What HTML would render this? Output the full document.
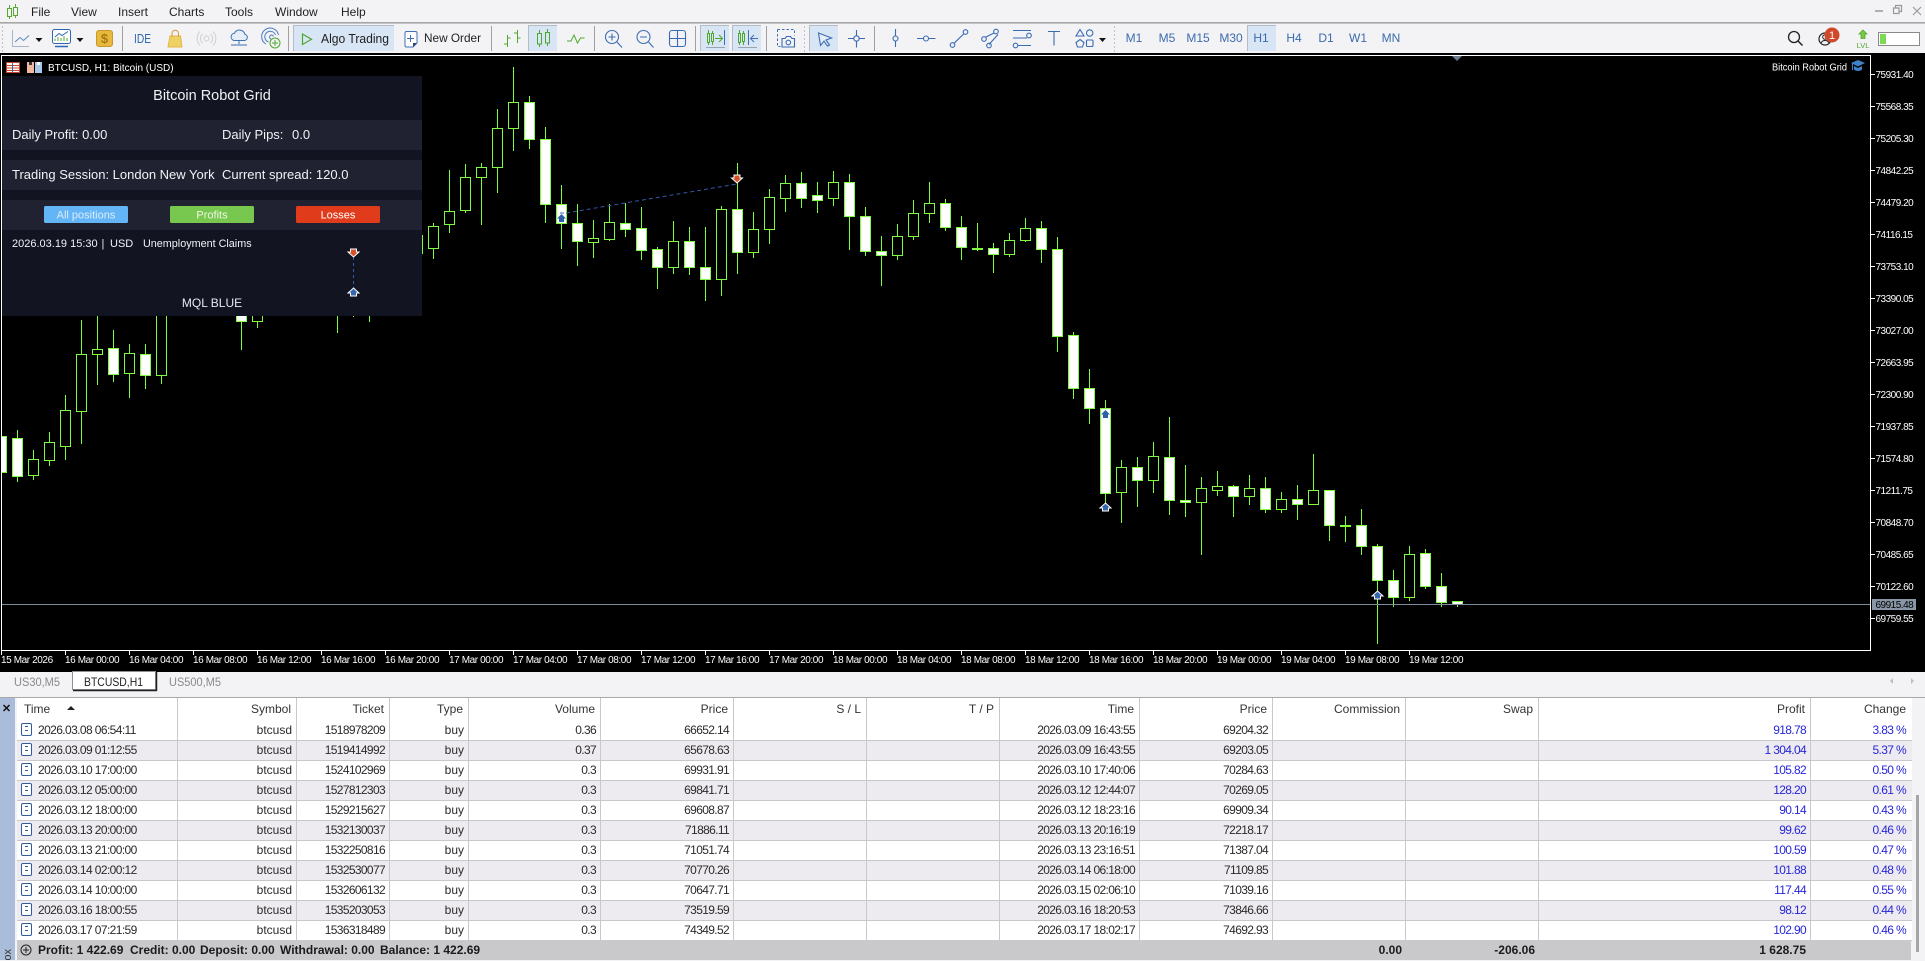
<!DOCTYPE html>
<html><head><meta charset="utf-8"><title>MetaTrader</title>
<style>
html,body{margin:0;padding:0;width:1925px;height:960px;overflow:hidden;background:#f3f2f5;font-family:"Liberation Sans",sans-serif}
svg text{font-family:"Liberation Sans",sans-serif}
#s{position:absolute;left:0;top:0}
#strip{position:absolute;left:0;top:698px;width:15px;height:262px;background:#a9bcd9}
table{position:absolute;left:17px;top:698px;width:1895px;table-layout:fixed;border-collapse:separate;border-spacing:0;font-size:12px;color:#2a2a2a;background:#fff}
th{height:23px;padding:0 5px 2px 0;text-align:right;font-weight:normal;border-right:1px solid #c8c8c8;box-sizing:border-box;white-space:nowrap;color:#333}
td{height:20px;padding:0 4px 0 0;text-align:right;border-right:1px solid #c8c8c8;border-bottom:1px solid #c8c8c8;box-sizing:border-box;white-space:nowrap;line-height:19px}
th:last-child,td:last-child{border-right:0;padding-right:6px}
tr:nth-child(even) td{background:#edebef}
td.n{letter-spacing:-.65px}
td.b{color:#2626d9;letter-spacing:-.65px}
td:first-child{text-align:left;padding-left:4px;letter-spacing:-.6px}
th:first-child{text-align:left;padding-left:7px}
i{display:inline-block;width:9px;height:11px;border:1px solid #2f5a9e;border-radius:2px;margin-right:6px;vertical-align:-2px;position:relative;background:#fff}
i:before{content:"";position:absolute;left:3px;top:2px;width:3px;height:3px;border-top:1px solid #2f5a9e;border-bottom:1px solid #2f5a9e}
#tot{position:absolute;left:17px;top:940px;width:1894px;height:20px;background:#c9c8cb;font-weight:bold;font-size:12px;line-height:21px;color:#1a1a1a}
#tot span{position:absolute;white-space:pre}
#rs{position:absolute;left:1912px;top:698px;width:13px;height:262px;background:#f3f2f5}
#th{position:absolute;left:4px;top:97px;width:3px;height:157px;background:#a5a5a5}
#so{position:absolute;left:67px;top:706px;width:0;height:0;border-left:4px solid transparent;border-right:4px solid transparent;border-bottom:4px solid #222}
</style></head><body>
<svg id="s" width="1925" height="960" viewBox="0 0 1925 960" xmlns="http://www.w3.org/2000/svg">
<defs><clipPath id="c"><rect x="2" y="56" width="1868" height="594"/></clipPath></defs>
<!-- menu -->
<g fill="#1f1f1f" font-size="12">
<text x="31" y="16">File</text><text x="71" y="16">View</text><text x="118" y="16">Insert</text><text x="169" y="16">Charts</text><text x="225" y="16">Tools</text><text x="275" y="16">Window</text><text x="341" y="16">Help</text>
</g>
<path d="M9.5 5v3M9.5 16v3M15.5 4v3M15.5 15v3" stroke="#5aa832" fill="none"/>
<path d="M7.5 8.500h4v8h-4zM13.500 7.500h4v8h-4z" stroke="#5aa832" fill="none"/>
<path d="M1875 11h8" stroke="#999" stroke-width="1.500"/>
<path d="M1893.500 13.500h5.500v-5.500h-5.500zM1895.500 8v-2.500h6v6h-2.500" stroke="#999" fill="none" stroke-width="1.200"/>
<path d="M1913 7l8 8M1921 7l-8 8" stroke="#999" stroke-width="1.200"/>
<rect x="0" y="22" width="1925" height="1" fill="#a6a6a6"/><rect x="0" y="23" width="1925" height="1" fill="#c4c4c4"/>
<!-- toolbar -->
<path d="M2.500 26v26M804.500 26v26M1114.500 26v26" stroke="#c2c2c2" stroke-dasharray="2 2"/>
<g fill="#d7e5f5" stroke="none">
<rect x="293" y="25" width="101" height="26"/><rect x="528" y="25" width="29" height="26"/><rect x="700" y="25" width="29" height="26"/><rect x="732" y="25" width="29" height="26"/><rect x="809" y="25" width="29" height="26"/><rect x="1247" y="25" width="29" height="26"/>
</g>
<path d="M293.500 51V25.500H394M528.500 51V25.500H557M700.500 51V25.500H729M732.500 51V25.500H761M809.500 51V25.500H838M1247.500 51V25.500H1276" stroke="#b4bcc8" fill="none"/>
<path d="M122.500 26v25M288.500 26v25M491.500 26v25M594.500 26v25M695.500 26v25M766.500 26v25M874.500 26v25" stroke="#9f9f9f"/>
<path d="M12.500 30v16.500H29" stroke="#a9b4c6" fill="none"/><path d="M15 42l5-4.500 3.500 3 5.500-5" stroke="#5f8ac4" fill="none"/>
<path d="M35.500 38h7l-3.500 4zM76.500 38h7l-3.500 4zM1099 38h7l-3.500 4z" fill="#111"/>
<rect x="52.500" y="29.500" width="18" height="14" rx="2" fill="#fff" stroke="#2f66b0"/><path d="M55 41v-2.500M58 41v-4M61 41v-3M64 41v-5M67 41v-3" stroke="#5aa832"/><path d="M55 37l4-3.500 3 2 6-4" stroke="#2f66b0" fill="none"/><path d="M55 46.500h13" stroke="#2f66b0" stroke-width="1.500"/>
<rect x="96.500" y="30.500" width="16" height="16" rx="2.500" fill="#e9b93d" stroke="#c8982a"/><text x="104.500" y="43" font-size="13" font-weight="bold" fill="#a67a12" text-anchor="middle">$</text>
<text x="134" y="43" font-size="13" fill="#2f66b0" textLength="17" lengthAdjust="spacingAndGlyphs">IDE</text>
<path d="M170 36h10.500l1.500 11h-14z" fill="#efd064" stroke="#e2b848"/><path d="M172 37v-3.500a3.200 3.200 0 0 1 6.500 0V37" stroke="#d69a3a" fill="none"/>
<g stroke="#cfcfcf" fill="none"><circle cx="206.500" cy="38.500" r="2.500"/><path d="M202.500 34a6 6 0 0 0 0 9M210.500 34a6 6 0 0 1 0 9M200 31.500a10 10 0 0 0 0 14M213 31.500a10 10 0 0 1 0 14"/></g>
<path d="M234 40.500a3.700 3.700 0 0 1 .5-7.300 5.500 5.500 0 0 1 10.300 1 3.200 3.200 0 0 1 -.3 6.300zM239 41v3M231 45h16" stroke="#3f6fb5" fill="#e6eef8"/>
<g fill="none" stroke="#4a7cc0"><path d="M266 44a8.500 8.500 0 1 1 12.500-9M268.500 42a5.500 5.500 0 1 1 7-7M271 39a2 2 0 1 1 2.500-2.500"/></g>
<circle cx="275" cy="43" r="5" fill="#f3f2f5" stroke="#4fa82e"/><path d="M275 40v6M272 43h6" stroke="#4fa82e"/>
<path d="M302.500 34v10.500l9-5.200z" stroke="#4fa82e" fill="none" stroke-width="1.200"/>
<text x="321" y="43" font-size="12.500" fill="#1f1f1f" textLength="68" lengthAdjust="spacingAndGlyphs">Algo Trading</text>
<path d="M406.500 31.500h9a1.500 1.500 0 0 1 1.500 1.500v10l-4 4h-6.500a1.500 1.500 0 0 1 -1.500-1.500V33a1.500 1.500 0 0 1 1.500-1.500z" stroke="#3f6fb5" fill="#fff"/><path d="M410.500 35v7M407 38.500h7" stroke="#3f6fb5"/><path d="M417 43l-4 4v-4z" fill="#33466a"/>
<text x="424" y="42" font-size="12" fill="#1f1f1f" textLength="57" lengthAdjust="spacingAndGlyphs">New Order</text>
<g stroke="#4fa82e" fill="none">
<path d="M507.500 35v12M504 44h3.500M507.500 38h3M517.500 30v13M514 33h3.500M517.500 38h3"/>
<path d="M539.500 30v3M539.500 44v3M547.500 29v3M547.500 43v3"/><rect x="537.500" y="33.500" width="4" height="10.500"/><rect x="545.500" y="32.500" width="4" height="10.500"/>
<path d="M567 41h4l3-6 3.500 8 3-5h4"/>
<path d="M708.500 30v15M712.500 31v14"/><rect x="707.500" y="33.500" width="2" height="9" fill="#d7e5f5"/><rect x="711.500" y="33.500" width="2" height="8" fill="#d7e5f5"/>
<path d="M715 38.500h7M719 35l3.500 3.500-3.500 3.500"/>
<path d="M739.500 30v15M743.500 31v14"/><rect x="738.500" y="33.500" width="2" height="9" fill="#d7e5f5"/><rect x="742.500" y="33.500" width="2" height="8" fill="#d7e5f5"/>
</g>
<path d="M724.500 30v15M748.500 30v15M758 38.500h-7M754 35l-3.500 3.500 3.500 3.500" stroke="#3f6fb5" fill="none"/>
<path d="M706 47.500h19M738 47.500h19" stroke="#9aa3ae"/>
<g fill="none" stroke="#3a6cb2" stroke-width="1.100">
<circle cx="612" cy="37" r="6.500"/><path d="M612 33.500v7M608.500 37h7M617 42l5 5.500"/>
<circle cx="643.500" cy="37" r="6.500"/><path d="M640 37h7M648.500 42l5 5.500"/>
<rect x="669.500" y="30.500" width="16" height="16" rx="2.500"/><path d="M677.500 30.500v16M669.500 38.500h16"/>
<path d="M777.500 29.500h17v6M777.500 29.500v17h3" stroke-dasharray="2.500 2" stroke-width="1"/>
<path d="M782 38.500h3l1.500-2h4l1.500 2h2.500v8.500h-12.500z"/><circle cx="788.300" cy="42.500" r="2.300"/>
<path d="M818.500 33l13 5-5.500 2 3.500 5-2 1.200-3.500-5-3.500 4.300z" fill="#e6eef8"/>
<path d="M856.500 30v5.500M856.500 41.500v6M848 38.500h5.500M859.500 38.500h5.500"/><circle cx="856.500" cy="38.500" r="2.700"/>
<path d="M895.500 29v7M895.500 41v6"/><circle cx="895.500" cy="38.500" r="2.500"/>
<path d="M917 38.500h6.500M928.500 38.500h7"/><circle cx="926" cy="38.500" r="2.500"/>
<circle cx="952.500" cy="45" r="2.300"/><circle cx="965.500" cy="32" r="2.300"/><path d="M954 43.300l10-9.700"/>
<circle cx="984" cy="39" r="2.300"/><circle cx="996" cy="31.500" r="2.300"/><path d="M985.500 37.200l9-4.500M989 44.500l9-10"/><circle cx="989" cy="45.500" r="2.300"/>
<path d="M1013 30.500h18M1013 38h14M1013 45.500h18"/><circle cx="1029" cy="35.500" r="2.300" fill="#f3f2f5"/><circle cx="1015.500" cy="45.500" r="2.300" fill="#f3f2f5"/>
<path d="M1048 31.500h12M1054 31.500v14"/>
<path d="M1080 29.500l4 6.500h-8z"/><circle cx="1089.700" cy="33" r="3.200"/><path d="M1080 39.500l4 3-1.500 4.500h-5l-1.500-4.500z"/><rect x="1086.500" y="40" width="6.500" height="6.500" rx="1"/>
</g>
<g fill="#3b6cad" font-size="12" text-anchor="middle">
<text x="1134" y="42">M1</text><text x="1167" y="42">M5</text><text x="1198" y="42">M15</text><text x="1231" y="42">M30</text><text x="1261" y="42">H1</text><text x="1294" y="42">H4</text><text x="1326" y="42">D1</text><text x="1358" y="42">W1</text><text x="1391" y="42">MN</text>
</g>
<circle cx="1794" cy="37" r="5.500" fill="none" stroke="#222" stroke-width="1.300"/><path d="M1798 41l4.500 4.500" stroke="#222" stroke-width="1.500"/>
<circle cx="1825" cy="39" r="6" fill="none" stroke="#222" stroke-width="1.200"/><circle cx="1825" cy="37" r="2.300" fill="none" stroke="#222"/><path d="M1821 43a4.500 4.500 0 0 1 8 0" fill="none" stroke="#222"/>
<circle cx="1832" cy="35" r="7.500" fill="#d1492b"/><text x="1832" y="39" font-size="11" fill="#fff" text-anchor="middle">1</text>
<path d="M1863 30l4 4h-2v4.500h-4V34h-2z" fill="#7ac943" stroke="#4fa82e" stroke-width=".8"/><text x="1863" y="48" font-size="7.500" fill="#4fa82e" text-anchor="middle">LVL</text>
<rect x="1878.500" y="32.500" width="41" height="13" fill="#fff" stroke="#8a8a8a"/><rect x="1880" y="34" width="6" height="10" fill="#7ed957"/>
<!-- chart -->
<rect x="0" y="53" width="1925" height="619" fill="#000"/>
<path d="M1.500 55.500H1870.500V650.500H1.500z" fill="none" stroke="#fff"/>
<path d="M1452 56h10l-5 5z" fill="#6b7a8a"/>
<g clip-path="url(#c)" shape-rendering="crispEdges">
<path stroke="#7dfb3e" fill="none" d="M17.500 430V482M33.500 450V480M49.500 432V466M65.500 395V460M81.500 320V444M97.500 316V385M113.500 330V382M129.500 344V398M145.500 344V389M161.500 300V384M241.500 300V350M257.500 300V328M337.500 300V333M353.500 300V317M369.500 300V322M433.500 223V259M449.500 170V233M465.500 164V213M481.500 163V225M497.500 109V193M513.500 67V151M529.500 96V149M545.500 127V223M561.500 185V249M577.500 204V266M593.500 220V258M609.500 204V241M625.500 203V237M641.500 207V260M657.500 247V289M673.500 221V274M689.500 227V275M705.500 227V301M721.500 206V296M737.500 163V274M753.500 212V258M769.500 189V244M785.500 175V212M801.500 172V208M817.500 182V213M833.500 171V206M849.500 174V250M865.500 207V256M881.500 236V286M897.500 224V260M913.500 200V240M929.500 182V223M945.500 199V231M961.500 216V260M977.500 223V251M993.500 243V273M1009.500 233V257M1025.500 218V242M1041.500 221V263M1057.500 237V352M1073.500 332V399M1089.500 369V424M1105.500 400V503M1121.500 460V523M1137.500 457V507M1153.500 442V493M1169.500 417V515M1185.500 465V517M1201.500 477V555M1217.500 471V496M1233.500 485V517M1249.500 475V505M1265.500 477V513M1281.500 492V513M1297.500 485V520M1313.500 454V504M1329.500 490V541M1345.500 516V542M1361.500 509V555M1377.500 544V644M1393.500 570V607M1409.500 546V601M1425.500 549V589M1441.500 573V607M1457.500 601V607"/>
<path stroke="#7dfb3e" fill="#000" d="M28.500 459.500h10v16h-10zM44.500 442.500h10v18h-10zM60.500 410.500h10v36h-10zM76.500 354.500h10v57h-10zM92.500 349.500h10v5h-10zM124.500 353.500h10v20h-10zM156.500 300.500h10v75h-10zM252.500 300.500h10v21h-10zM412.500 235.500h10v18h-10zM428.500 226.500h10v22h-10zM444.500 211.500h10v13h-10zM460.500 177.500h10v33h-10zM476.500 167.500h10v10h-10zM492.500 128.500h10v39h-10zM508.500 102.500h10v26h-10zM588.500 238.500h10v4h-10zM604.500 222.500h10v17h-10zM668.500 241.500h10v26h-10zM716.500 209.500h10v70h-10zM748.500 229.500h10v23h-10zM764.500 197.500h10v32h-10zM780.500 183.500h10v15h-10zM828.500 182.500h10v16h-10zM892.500 236.500h10v19h-10zM908.500 213.500h10v23h-10zM924.500 203.500h10v10h-10zM1004.500 240.500h10v14h-10zM1020.500 228.500h10v12h-10zM1116.500 467.500h10v25h-10zM1148.500 456.500h10v24h-10zM1196.500 488.500h10v14h-10zM1212.500 486.500h10v4h-10zM1244.500 488.500h10v8h-10zM1276.500 499.500h10v10h-10zM1308.500 490.500h10v14h-10zM1404.500 554.500h10v43h-10z"/>
<path stroke="#7dfb3e" fill="#fff" d="M-3.500 436.500h10v36h-10zM12.500 438.500h10v38h-10zM108.500 348.500h10v26h-10zM140.500 354.500h10v21h-10zM236.500 300.500h10v21h-10zM524.500 102.500h10v37h-10zM540.500 139.500h10v65h-10zM556.500 204.500h10v19h-10zM572.500 223.500h10v18h-10zM620.500 223.500h10v6h-10zM636.500 228.500h10v22h-10zM652.500 249.500h10v18h-10zM684.500 241.500h10v26h-10zM700.500 267.500h10v12h-10zM732.500 209.500h10v43h-10zM796.500 183.500h10v15h-10zM812.500 195.500h10v5h-10zM844.500 182.500h10v34h-10zM860.500 216.500h10v35h-10zM876.500 251.500h10v4h-10zM940.500 203.500h10v24h-10zM956.500 227.500h10v20h-10zM988.500 248.500h10v6h-10zM1036.500 228.500h10v21h-10zM1052.500 249.500h10v87h-10zM1068.500 335.500h10v53h-10zM1084.500 388.500h10v20h-10zM1100.500 408.500h10v85h-10zM1132.500 467.500h10v13h-10zM1164.500 457.500h10v43h-10zM1180.500 500.500h10v2h-10zM1228.500 486.500h10v10h-10zM1260.500 488.500h10v21h-10zM1292.500 499.500h10v5h-10zM1324.500 490.500h10v35h-10zM1356.500 525.500h10v21h-10zM1372.500 546.500h10v34h-10zM1388.500 580.500h10v17h-10zM1420.500 553.500h10v33h-10zM1436.500 586.500h10v16h-10zM1452.500 601.500h10v3h-10z"/>
<path fill="#7dfb3e" d="M972 248h11v2h-11zM1340 525h11v2h-11z"/>
</g>
<path d="M2 604.500H1870" stroke="#7f8c9c"/>
<!-- trade line and markers -->
<path d="M566 213L737 184" stroke="#3558a8" stroke-dasharray="4 3" fill="none"/>
<!-- panel -->
<rect x="2" y="76" width="420" height="240" fill="#121421"/>
<rect x="2" y="120" width="420" height="30" fill="#212231"/><rect x="2" y="160" width="420" height="30" fill="#212231"/><rect x="2" y="200" width="420" height="30" fill="#212231"/>
<g fill="#f0f2f6" font-size="13">
<text x="212" y="100" font-size="14.500" text-anchor="middle">Bitcoin Robot Grid</text>
<text x="12" y="139">Daily Profit: 0.00</text><text x="222" y="139">Daily Pips:</text><text x="292" y="139">0.0</text>
<text x="12" y="179">Trading Session: London New York</text><text x="222" y="179">Current spread: 120.0</text>
<text x="212" y="307" font-size="12" text-anchor="middle" fill="#e6e9f2">MQL BLUE</text>
<g font-size="11"><text x="12" y="247">2026.03.19 15:30</text><text x="101.500" y="247">|</text><text x="110" y="247">USD</text><text x="143" y="247" font-size="10.800">Unemployment Claims</text></g>
</g>
<rect x="44" y="206" width="84" height="17" rx="1.500" fill="#64b5f6"/><rect x="170" y="206" width="84" height="17" rx="1.500" fill="#78c84f"/><rect x="296" y="206" width="84" height="17" rx="1.500" fill="#e03c1c"/>
<g font-size="11" text-anchor="middle"><text x="86" y="218.500" fill="#dcedfb">All positions</text><text x="212" y="218.500" fill="#eef8e6">Profits</text><text x="338" y="218.500" fill="#fff">Losses</text></g>
<path d="M353.500 257V288" stroke="#3a5fa0" stroke-dasharray="3 3"/>
<g stroke="#fff" stroke-width="1">
<path d="M350.500 249h6v3h2.500l-5.500 5-5.500-5h2.500z" fill="#d4532a"/>
<path d="M734 175h6v3h2.500l-5.500 5-5.500-5h2.500z" fill="#d4532a"/>
<path d="M353.500 288l5.500 5h-2.500v3h-6v-3h-2.500z" fill="#3566ad"/>
<path d="M1105.500 503l5.500 5h-2.500v3h-6v-3h-2.500z" fill="#3566ad"/>
<path d="M1377.500 591l5.500 5h-2.500v3h-6v-3h-2.500z" fill="#3566ad"/>
</g>
<path d="M561.500 214l4.500 4.500h-2v3.500h-5v-3.500h-2zM1105.500 410l4.500 4.500h-2v3.500h-5v-3.500h-2z" fill="#2f5ea8"/><path d="M560 213h4" stroke="#3566ad"/>
<!-- chart title -->
<rect x="6.500" y="62.500" width="13" height="10" fill="#fff" stroke="#c8452d"/><path d="M7 65.500h12M7 68h12M7 70.500h12" stroke="#c8452d"/><path d="M12.500 63v9" stroke="#2f66b0"/>
<rect x="27" y="62" width="7" height="11" fill="#f0b8a0"/><rect x="35" y="62" width="7" height="11" fill="#a9c8ec"/><rect x="29" y="62" width="3" height="3" fill="#333"/><rect x="37" y="62" width="3" height="3" fill="#fff"/>
<g fill="#fff" font-size="10"><text x="48" y="71">BTCUSD, H1:</text><text x="113" y="71">Bitcoin (USD)</text><text x="1772" y="70.500" textLength="75" lengthAdjust="spacingAndGlyphs">Bitcoin Robot Grid</text></g>
<path d="M1851 63l7-3 7 3-7 3.500z" fill="#3f82c8"/><path d="M1854 66v3.500c2 2 6 2 8 0V66l-4 2z" fill="#3f82c8"/><path d="M1852.500 63.500v6.500" stroke="#3f82c8"/>
<!-- price axis -->
<g stroke="#fff"><path d="M1870 74.500h5M1870 106.500h5M1870 138.500h5M1870 170.500h5M1870 202.500h5M1870 234.500h5M1870 266.500h5M1870 298.500h5M1870 330.500h5M1870 362.500h5M1870 394.500h5M1870 426.500h5M1870 458.500h5M1870 490.500h5M1870 522.500h5M1870 554.500h5M1870 586.500h5M1870 618.500h5"/></g>
<g fill="#fff" font-size="10" letter-spacing="-.5">
<text x="1875.500" y="78">75931.40</text><text x="1875.500" y="110">75568.35</text><text x="1875.500" y="142">75205.30</text><text x="1875.500" y="174">74842.25</text><text x="1875.500" y="206">74479.20</text><text x="1875.500" y="238">74116.15</text><text x="1875.500" y="270">73753.10</text><text x="1875.500" y="302">73390.05</text><text x="1875.500" y="334">73027.00</text><text x="1875.500" y="366">72663.95</text><text x="1875.500" y="398">72300.90</text><text x="1875.500" y="430">71937.85</text><text x="1875.500" y="462">71574.80</text><text x="1875.500" y="494">71211.75</text><text x="1875.500" y="526">70848.70</text><text x="1875.500" y="558">70485.65</text><text x="1875.500" y="590">70122.60</text><text x="1875.500" y="622">69759.55</text>
</g>
<rect x="1872" y="599" width="44" height="11" fill="#8896a6"/><text x="1875.500" y="608" font-size="10" letter-spacing="-.5" fill="#000">69915.48</text>
<!-- time axis -->
<path stroke="#fff" d="M1.500 650v5M65.500 650v5M129.500 650v5M193.500 650v5M257.500 650v5M321.500 650v5M385.500 650v5M449.500 650v5M513.500 650v5M577.500 650v5M641.500 650v5M705.500 650v5M769.500 650v5M833.500 650v5M897.500 650v5M961.500 650v5M1025.500 650v5M1089.500 650v5M1153.500 650v5M1217.500 650v5M1281.500 650v5M1345.500 650v5M1409.500 650v5"/>
<g fill="#fff" font-size="10" letter-spacing="-.4">
<text x="1" y="663">15 Mar 2026</text><text x="65" y="663">16 Mar 00:00</text><text x="129" y="663">16 Mar 04:00</text><text x="193" y="663">16 Mar 08:00</text><text x="257" y="663">16 Mar 12:00</text><text x="321" y="663">16 Mar 16:00</text><text x="385" y="663">16 Mar 20:00</text><text x="449" y="663">17 Mar 00:00</text><text x="513" y="663">17 Mar 04:00</text><text x="577" y="663">17 Mar 08:00</text><text x="641" y="663">17 Mar 12:00</text><text x="705" y="663">17 Mar 16:00</text><text x="769" y="663">17 Mar 20:00</text><text x="833" y="663">18 Mar 00:00</text><text x="897" y="663">18 Mar 04:00</text><text x="961" y="663">18 Mar 08:00</text><text x="1025" y="663">18 Mar 12:00</text><text x="1089" y="663">18 Mar 16:00</text><text x="1153" y="663">18 Mar 20:00</text><text x="1217" y="663">19 Mar 00:00</text><text x="1281" y="663">19 Mar 04:00</text><text x="1345" y="663">19 Mar 08:00</text><text x="1409" y="663">19 Mar 12:00</text>
</g>
<!-- tabs -->
<rect x="72.500" y="671.500" width="83" height="18" fill="#fff" stroke="#8f8f8f"/><path d="M73 690.500h84M156.500 672v19" stroke="#222" stroke-width="1.500"/>
<g font-size="12"><text x="14" y="686" fill="#8a8a8a" textLength="46" lengthAdjust="spacingAndGlyphs">US30,M5</text><text x="84" y="686" fill="#1f1f1f" textLength="59" lengthAdjust="spacingAndGlyphs">BTCUSD,H1</text><text x="169" y="686" fill="#8a8a8a" textLength="52" lengthAdjust="spacingAndGlyphs">US500,M5</text></g>
<path d="M1893 678v6l-3-3zM1911 678v6l3-3z" fill="#bdbdbd"/>
<rect x="0" y="697" width="1925" height="1" fill="#a8a8a8"/>
</svg>
<div id="strip"></div>
<svg style="position:absolute;left:0;top:698px" width="16" height="262" xmlns="http://www.w3.org/2000/svg">
<path d="M3.500 7l6 6M9.500 7l-6 6" stroke="#111" stroke-width="1.500"/>
<text x="0" y="0" font-size="11" fill="#333" text-anchor="end" transform="translate(11,251) rotate(-90)">Toolbox</text>
</svg>
<table>
<colgroup><col style="width:161px"><col style="width:119px"><col style="width:93px"><col style="width:79px"><col style="width:132px"><col style="width:133px"><col style="width:133px"><col style="width:133px"><col style="width:140px"><col style="width:133px"><col style="width:133px"><col style="width:133px"><col style="width:272px"><col style="width:101px"></colgroup>
<thead><tr><th>Time</th><th>Symbol</th><th>Ticket</th><th>Type</th><th>Volume</th><th>Price</th><th>S / L</th><th>T / P</th><th>Time</th><th>Price</th><th>Commission</th><th>Swap</th><th>Profit</th><th>Change</th></tr></thead>
<tbody>
<tr><td><i></i>2026.03.08 06:54:11</td><td>btcusd</td><td class="n">1518978209</td><td>buy</td><td class="n">0.36</td><td class="n">66652.14</td><td></td><td></td><td class="n">2026.03.09 16:43:55</td><td class="n">69204.32</td><td></td><td></td><td class="b">918.78</td><td class="b">3.83 %</td></tr>
<tr><td><i></i>2026.03.09 01:12:55</td><td>btcusd</td><td class="n">1519414992</td><td>buy</td><td class="n">0.37</td><td class="n">65678.63</td><td></td><td></td><td class="n">2026.03.09 16:43:55</td><td class="n">69203.05</td><td></td><td></td><td class="b">1 304.04</td><td class="b">5.37 %</td></tr>
<tr><td><i></i>2026.03.10 17:00:00</td><td>btcusd</td><td class="n">1524102969</td><td>buy</td><td class="n">0.3</td><td class="n">69931.91</td><td></td><td></td><td class="n">2026.03.10 17:40:06</td><td class="n">70284.63</td><td></td><td></td><td class="b">105.82</td><td class="b">0.50 %</td></tr>
<tr><td><i></i>2026.03.12 05:00:00</td><td>btcusd</td><td class="n">1527812303</td><td>buy</td><td class="n">0.3</td><td class="n">69841.71</td><td></td><td></td><td class="n">2026.03.12 12:44:07</td><td class="n">70269.05</td><td></td><td></td><td class="b">128.20</td><td class="b">0.61 %</td></tr>
<tr><td><i></i>2026.03.12 18:00:00</td><td>btcusd</td><td class="n">1529215627</td><td>buy</td><td class="n">0.3</td><td class="n">69608.87</td><td></td><td></td><td class="n">2026.03.12 18:23:16</td><td class="n">69909.34</td><td></td><td></td><td class="b">90.14</td><td class="b">0.43 %</td></tr>
<tr><td><i></i>2026.03.13 20:00:00</td><td>btcusd</td><td class="n">1532130037</td><td>buy</td><td class="n">0.3</td><td class="n">71886.11</td><td></td><td></td><td class="n">2026.03.13 20:16:19</td><td class="n">72218.17</td><td></td><td></td><td class="b">99.62</td><td class="b">0.46 %</td></tr>
<tr><td><i></i>2026.03.13 21:00:00</td><td>btcusd</td><td class="n">1532250816</td><td>buy</td><td class="n">0.3</td><td class="n">71051.74</td><td></td><td></td><td class="n">2026.03.13 23:16:51</td><td class="n">71387.04</td><td></td><td></td><td class="b">100.59</td><td class="b">0.47 %</td></tr>
<tr><td><i></i>2026.03.14 02:00:12</td><td>btcusd</td><td class="n">1532530077</td><td>buy</td><td class="n">0.3</td><td class="n">70770.26</td><td></td><td></td><td class="n">2026.03.14 06:18:00</td><td class="n">71109.85</td><td></td><td></td><td class="b">101.88</td><td class="b">0.48 %</td></tr>
<tr><td><i></i>2026.03.14 10:00:00</td><td>btcusd</td><td class="n">1532606132</td><td>buy</td><td class="n">0.3</td><td class="n">70647.71</td><td></td><td></td><td class="n">2026.03.15 02:06:10</td><td class="n">71039.16</td><td></td><td></td><td class="b">117.44</td><td class="b">0.55 %</td></tr>
<tr><td><i></i>2026.03.16 18:00:55</td><td>btcusd</td><td class="n">1535203053</td><td>buy</td><td class="n">0.3</td><td class="n">73519.59</td><td></td><td></td><td class="n">2026.03.16 18:20:53</td><td class="n">73846.66</td><td></td><td></td><td class="b">98.12</td><td class="b">0.44 %</td></tr>
<tr><td><i></i>2026.03.17 07:21:59</td><td>btcusd</td><td class="n">1536318489</td><td>buy</td><td class="n">0.3</td><td class="n">74349.52</td><td></td><td></td><td class="n">2026.03.17 18:02:17</td><td class="n">74692.93</td><td></td><td></td><td class="b">102.90</td><td class="b">0.46 %</td></tr>
</tbody></table>
<div id="so"></div>
<div id="tot">
<svg style="position:absolute;left:3px;top:4px" width="12" height="12" xmlns="http://www.w3.org/2000/svg"><circle cx="6" cy="6" r="5" fill="none" stroke="#222"/><path d="M6 3v6M3 6h6" stroke="#222"/></svg>
<span style="left:21px">Profit: 1 422.69</span>
<span style="left:113px">Credit: 0.00</span>
<span style="left:183px">Deposit: 0.00</span>
<span style="left:263px">Withdrawal: 0.00</span>
<span style="left:363px">Balance: 1 422.69</span>
<span style="right:509px">0.00</span>
<span style="right:376px">-206.06</span>
<span style="right:105px">1 628.75</span>
</div>
<div id="rs"><div id="th"></div></div>
</body></html>
